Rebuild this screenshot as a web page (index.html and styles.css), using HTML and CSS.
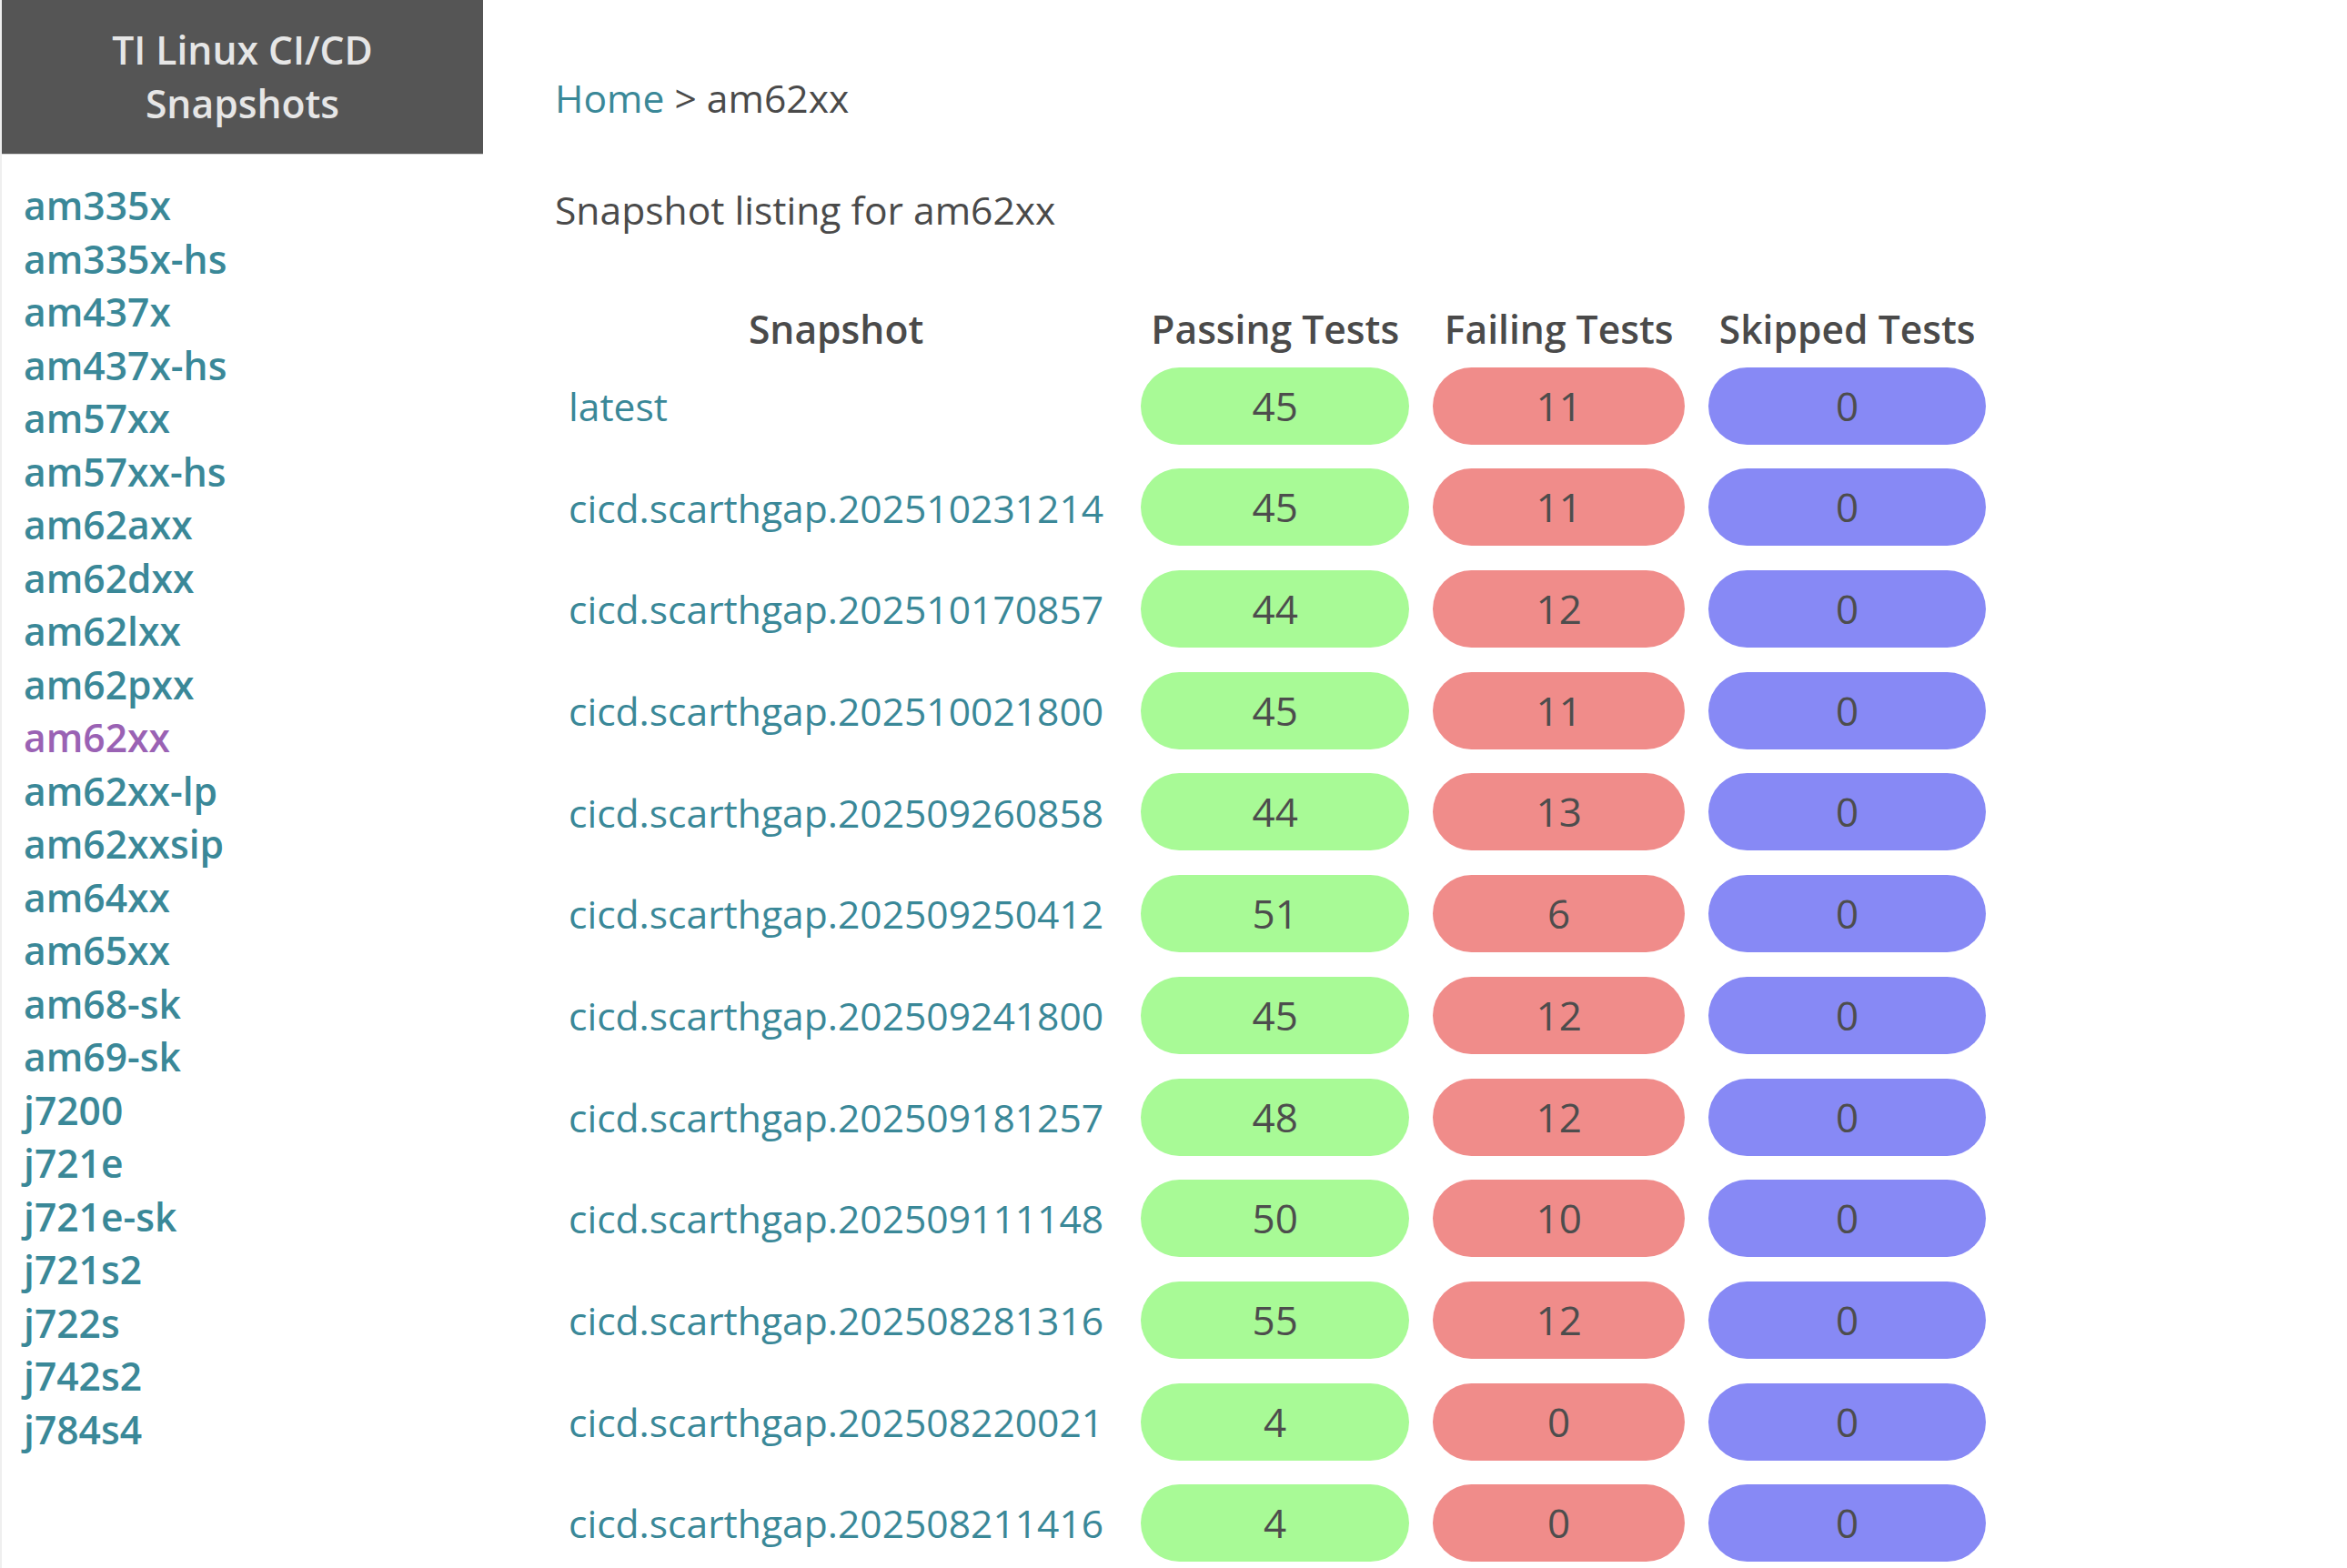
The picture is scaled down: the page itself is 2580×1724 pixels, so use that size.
FILE: index.html
```html
<!DOCTYPE html>
<html lang="en">
<head>
<meta charset="utf-8">
<title>am62xx - TI Linux CI/CD Snapshots</title>
<link rel="stylesheet" href="styles.css">
</head>
<body>
<div class="page">
  <aside class="sidebar">
    <div class="brand">TI Linux CI/CD<br>Snapshots</div>
    <nav class="platforms">
      <a href="#">am335x</a>
      <a href="#">am335x-hs</a>
      <a href="#">am437x</a>
      <a href="#">am437x-hs</a>
      <a href="#">am57xx</a>
      <a href="#">am57xx-hs</a>
      <a href="#">am62axx</a>
      <a href="#">am62dxx</a>
      <a href="#">am62lxx</a>
      <a href="#">am62pxx</a>
      <a href="#" class="visited">am62xx</a>
      <a href="#">am62xx-lp</a>
      <a href="#">am62xxsip</a>
      <a href="#">am64xx</a>
      <a href="#">am65xx</a>
      <a href="#">am68-sk</a>
      <a href="#">am69-sk</a>
      <a href="#">j7200</a>
      <a href="#">j721e</a>
      <a href="#">j721e-sk</a>
      <a href="#">j721s2</a>
      <a href="#">j722s</a>
      <a href="#">j742s2</a>
      <a href="#">j784s4</a>
    </nav>
  </aside>
  <main class="content">
    <p class="crumbs"><a href="#">Home</a> &gt; am62xx</p>
    <p class="listing-title">Snapshot listing for am62xx</p>
    <table class="snapshots">
      <thead>
        <tr>
          <th class="col-name">Snapshot</th>
          <th class="col-count col-pass">Passing Tests</th>
          <th class="col-count col-fail">Failing Tests</th>
          <th class="col-count col-skip">Skipped Tests</th>
        </tr>
      </thead>
      <tbody>
        <tr><td class="name"><a href="#">latest</a></td><td class="count"><span class="pill pass">45</span></td><td class="count"><span class="pill fail">11</span></td><td class="count"><span class="pill skip">0</span></td></tr>
        <tr><td class="name"><a href="#">cicd.scarthgap.202510231214</a></td><td class="count"><span class="pill pass">45</span></td><td class="count"><span class="pill fail">11</span></td><td class="count"><span class="pill skip">0</span></td></tr>
        <tr><td class="name"><a href="#">cicd.scarthgap.202510170857</a></td><td class="count"><span class="pill pass">44</span></td><td class="count"><span class="pill fail">12</span></td><td class="count"><span class="pill skip">0</span></td></tr>
        <tr><td class="name"><a href="#">cicd.scarthgap.202510021800</a></td><td class="count"><span class="pill pass">45</span></td><td class="count"><span class="pill fail">11</span></td><td class="count"><span class="pill skip">0</span></td></tr>
        <tr><td class="name"><a href="#">cicd.scarthgap.202509260858</a></td><td class="count"><span class="pill pass">44</span></td><td class="count"><span class="pill fail">13</span></td><td class="count"><span class="pill skip">0</span></td></tr>
        <tr><td class="name"><a href="#">cicd.scarthgap.202509250412</a></td><td class="count"><span class="pill pass">51</span></td><td class="count"><span class="pill fail">6</span></td><td class="count"><span class="pill skip">0</span></td></tr>
        <tr><td class="name"><a href="#">cicd.scarthgap.202509241800</a></td><td class="count"><span class="pill pass">45</span></td><td class="count"><span class="pill fail">12</span></td><td class="count"><span class="pill skip">0</span></td></tr>
        <tr><td class="name"><a href="#">cicd.scarthgap.202509181257</a></td><td class="count"><span class="pill pass">48</span></td><td class="count"><span class="pill fail">12</span></td><td class="count"><span class="pill skip">0</span></td></tr>
        <tr><td class="name"><a href="#">cicd.scarthgap.202509111148</a></td><td class="count"><span class="pill pass">50</span></td><td class="count"><span class="pill fail">10</span></td><td class="count"><span class="pill skip">0</span></td></tr>
        <tr><td class="name"><a href="#">cicd.scarthgap.202508281316</a></td><td class="count"><span class="pill pass">55</span></td><td class="count"><span class="pill fail">12</span></td><td class="count"><span class="pill skip">0</span></td></tr>
        <tr><td class="name"><a href="#">cicd.scarthgap.202508220021</a></td><td class="count"><span class="pill pass">4</span></td><td class="count"><span class="pill fail">0</span></td><td class="count"><span class="pill skip">0</span></td></tr>
        <tr><td class="name"><a href="#">cicd.scarthgap.202508211416</a></td><td class="count"><span class="pill pass">4</span></td><td class="count"><span class="pill fail">0</span></td><td class="count"><span class="pill skip">0</span></td></tr>
      </tbody>
    </table>
  </main>
</div>
</body>
</html>
```

FILE: styles.css
```css
html, body {
  margin: 0;
  padding: 0;
  background: #ffffff;
}

body {
  font-family: "Open Sans", "Noto Sans", sans-serif;
  font-size: 42.6px;
  line-height: 58.8px;
  color: #4a4a4a;
}

a {
  color: #3a8898;
  text-decoration: none;
}

.page {
  display: flex;
  align-items: flex-start;
}

/* Sidebar */
.sidebar {
  width: 531px;
  flex: 0 0 531px;
  box-sizing: border-box;
  border-left: 2px solid #efefef;
  min-height: 1724px;
}

.brand {
  background: #555555;
  color: #e6e6e6;
  font-weight: 600;
  text-align: center;
  height: 170px;
  box-sizing: border-box;
  padding-top: 25px;
  border-bottom: 1px solid #d8d8d8;
}

.platforms {
  display: flex;
  flex-direction: column;
  align-items: flex-start;
  padding: 26px 0 0 24px;
  line-height: 58.5px;
}

.platforms a {
  font-weight: 600;
  color: #3a8898;
}

.platforms a.visited {
  color: #9a62b4;
}

/* Main content */
.content {
  flex: 1 1 auto;
  padding: 78px 0 0 79px;
}

.crumbs {
  margin: 0;
}

.listing-title {
  margin: 64px 0 0 0;
}

.snapshots {
  margin-top: 72px;
  border-collapse: collapse;
}

.snapshots th {
  font-weight: 600;
  text-align: center;
  padding: 0;
  line-height: 58.8px;
  white-space: nowrap;
}

.snapshots th.col-name {
  padding: 0 15px;
}

.snapshots th.col-count {
  padding-left: 26px;
}

.col-pass { width: 295px; }
.col-fail { width: 277px; }
.col-skip { width: 305px; }

.snapshots td {
  vertical-align: middle;
}

.snapshots td.name {
  padding: 13.35px 15px;
  white-space: nowrap;
}

.snapshots td.count {
  padding: 13.35px 0 13.35px 26px;
}

.pill {
  display: block;
  height: 85px;
  line-height: 85px;
  border-radius: 42.5px;
  text-align: center;
  font-size: 44px;
  color: #4d4d4d;
}

.pill.pass { background: #a8fa96; }
.pill.fail { background: #f08c8a; }
.pill.skip { background: #8789f5; }
```
